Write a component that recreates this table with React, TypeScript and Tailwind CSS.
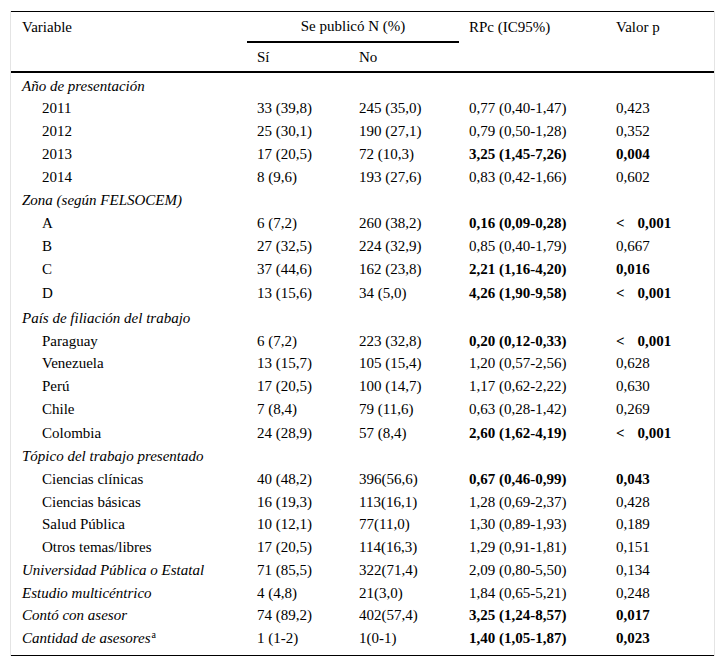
type Row = {
  label: string;
  kind: "section" | "item" | "plain";
  si?: string;
  no?: string;
  rpc?: string;
  p?: string;
  bold?: boolean;
  h: string;
  sup?: string;
};

const rows: Row[] = [
  { label: "Año de presentación", kind: "section", h: "h-[22px]" },
  { label: "2011", kind: "item", si: "33 (39,8)", no: "245 (35,0)", rpc: "0,77 (0,40-1,47)", p: "0,423", h: "h-[23px]" },
  { label: "2012", kind: "item", si: "25 (30,1)", no: "190 (27,1)", rpc: "0,79 (0,50-1,28)", p: "0,352", h: "h-[23px]" },
  { label: "2013", kind: "item", si: "17 (20,5)", no: "72 (10,3)", rpc: "3,25 (1,45-7,26)", p: "0,004", bold: true, h: "h-[23px]" },
  { label: "2014", kind: "item", si: "8 (9,6)", no: "193 (27,6)", rpc: "0,83 (0,42-1,66)", p: "0,602", h: "h-[23px]" },
  { label: "Zona (según FELSOCEM)", kind: "section", h: "h-[23px]" },
  { label: "A", kind: "item", si: "6 (7,2)", no: "260 (38,2)", rpc: "0,16 (0,09-0,28)", p: "<0,001", bold: true, h: "h-[23px]" },
  { label: "B", kind: "item", si: "27 (32,5)", no: "224 (32,9)", rpc: "0,85 (0,40-1,79)", p: "0,667", h: "h-[23px]" },
  { label: "C", kind: "item", si: "37 (44,6)", no: "162 (23,8)", rpc: "2,21 (1,16-4,20)", p: "0,016", bold: true, h: "h-[23px]" },
  { label: "D", kind: "item", si: "13 (15,6)", no: "34 (5,0)", rpc: "4,26 (1,90-9,58)", p: "<0,001", bold: true, h: "h-[25px]" },
  { label: "País de filiación del trabajo", kind: "section", h: "h-[24px]" },
  { label: "Paraguay", kind: "item", si: "6 (7,2)", no: "223 (32,8)", rpc: "0,20 (0,12-0,33)", p: "<0,001", bold: true, h: "h-[22px]" },
  { label: "Venezuela", kind: "item", si: "13 (15,7)", no: "105 (15,4)", rpc: "1,20 (0,57-2,56)", p: "0,628", h: "h-[23px]" },
  { label: "Perú", kind: "item", si: "17 (20,5)", no: "100 (14,7)", rpc: "1,17 (0,62-2,22)", p: "0,630", h: "h-[23px]" },
  { label: "Chile", kind: "item", si: "7 (8,4)", no: "79 (11,6)", rpc: "0,63 (0,28-1,42)", p: "0,269", h: "h-[23px]" },
  { label: "Colombia", kind: "item", si: "24 (28,9)", no: "57 (8,4)", rpc: "2,60 (1,62-4,19)", p: "<0,001", bold: true, h: "h-[24px]" },
  { label: "Tópico del trabajo presentado", kind: "section", h: "h-[23px]" },
  { label: "Ciencias clínicas", kind: "item", si: "40 (48,2)", no: "396(56,6)", rpc: "0,67 (0,46-0,99)", p: "0,043", bold: true, h: "h-[23px]" },
  { label: "Ciencias básicas", kind: "item", si: "16 (19,3)", no: "113(16,1)", rpc: "1,28 (0,69-2,37)", p: "0,428", h: "h-[22px]" },
  { label: "Salud Pública", kind: "item", si: "10 (12,1)", no: "77(11,0)", rpc: "1,30 (0,89-1,93)", p: "0,189", h: "h-[23px]" },
  { label: "Otros temas/libres", kind: "item", si: "17 (20,5)", no: "114(16,3)", rpc: "1,29 (0,91-1,81)", p: "0,151", h: "h-[23px]" },
  { label: "Universidad Pública o Estatal", kind: "plain", si: "71 (85,5)", no: "322(71,4)", rpc: "2,09 (0,80-5,50)", p: "0,134", h: "h-[23px]" },
  { label: "Estudio multicéntrico", kind: "plain", si: "4 (4,8)", no: "21(3,0)", rpc: "1,84 (0,65-5,21)", p: "0,248", h: "h-[22px]" },
  { label: "Contó con asesor", kind: "plain", si: "74 (89,2)", no: "402(57,4)", rpc: "3,25 (1,24-8,57)", p: "0,017", bold: true, h: "h-[23px]" },
  { label: "Cantidad de asesores", kind: "plain", sup: "a", si: "1 (1-2)", no: "1(0-1)", rpc: "1,40 (1,05-1,87)", p: "0,023", bold: true, h: "h-[23px]" },
];

function PValue({ value }: { value: string }) {
  if (value.startsWith("<")) {
    return (
      <>
        <span>&lt;</span>
        <span className="ml-[13px]">{value.slice(1)}</span>
      </>
    );
  }
  return <>{value}</>;
}

export default function App() {
  return (
    <div className="bg-white min-h-[669px] pt-[11px]">
      <div className="ml-[10px] w-[705px] border-x border-[#e4e4e4] font-['Liberation_Serif'] text-[15px] leading-[17px] text-black">
        {/* header */}
        <div className="flex border-t border-b-2 border-black">
          <div className="w-[236px] pl-[11px] pt-[7px]">Variable</div>
          <div className="w-[212px]">
            <div className="h-[31px] flex items-center justify-center border-b-2 border-black">
              Se publicó N (%)
            </div>
            <div className="h-[28px] flex items-center">
              <div className="w-[102px] pl-[10px]">Sí</div>
              <div className="w-[110px] pl-[10px]">No</div>
            </div>
          </div>
          <div className="w-[147px] pl-[10px] pt-[7px]">RPc (IC95%)</div>
          <div className="w-[108px] pl-[10px] pt-[7px]">Valor p</div>
        </div>

        {/* body */}
        <div className="pt-[2px] pb-[5px] border-b border-black">
          {rows.map((r) => (
            <div key={r.label} className={`flex items-center ${r.h}`}>
              <div
                className={`w-[236px] ${r.kind === "item" ? "pl-[31px]" : "pl-[11px] italic"}`}
              >
                {r.label}
                {r.sup && <sup className="not-italic text-[10px] ml-[1px]">{r.sup}</sup>}
              </div>
              <div className="w-[102px] pl-[10px]">{r.si}</div>
              <div className="w-[110px] pl-[10px]">{r.no}</div>
              <div className={`w-[147px] pl-[10px] ${r.bold ? "font-bold" : ""}`}>{r.rpc}</div>
              <div className={`w-[108px] pl-[10px] ${r.bold ? "font-bold" : ""}`}>
                {r.p && <PValue value={r.p} />}
              </div>
            </div>
          ))}
        </div>
      </div>
    </div>
  );
}
